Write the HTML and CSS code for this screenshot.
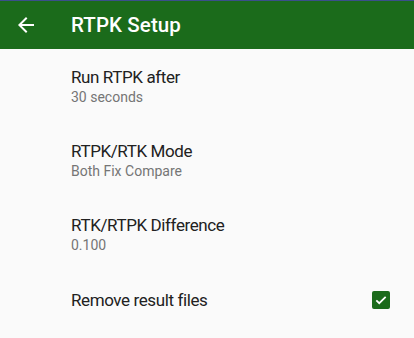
FILE: index.html
```html
<!DOCTYPE html>
<html lang="en">
    <head>
        <meta charset="UTF-8" />
        <meta name="viewport" content="width=device-width, initial-scale=1.0" />
        <link rel="stylesheet" href="styles.css">
        <title>RTPK Setup</title>
    </head>
    <body>
        <header class="toolbar">
            <button class="back-btn" aria-label="Back">
                <svg width="24" height="24" viewBox="0 0 24 24">
                    <path d="M20 11H7.83l5.59-5.59L12 4l-8 8 8 8 1.41-1.41L7.83 13H20v-2z" fill="#fff" />
                </svg>
            </button>
            <h1 class="title">RTPK Setup</h1>
        </header>

        <ul class="prefs">
            <li class="pref">
                <div class="pref-text">
                    <span class="pref-title">Run RTPK after</span>
                    <span class="pref-summary">30 seconds</span>
                </div>
            </li>
            <li class="pref">
                <div class="pref-text">
                    <span class="pref-title">RTPK/RTK Mode</span>
                    <span class="pref-summary">Both Fix Compare</span>
                </div>
            </li>
            <li class="pref">
                <div class="pref-text">
                    <span class="pref-title">RTK/RTPK Difference</span>
                    <span class="pref-summary">0.100</span>
                </div>
            </li>
            <li class="pref pref-single">
                <div class="pref-text">
                    <span class="pref-title">Remove result files</span>
                </div>
                <span class="checkbox checked">
                    <svg width="14" height="14" viewBox="0 0 24 24">
                        <path d="M4 12.5l5 5L20 6.5" fill="none" stroke="#fff" stroke-width="3" />
                    </svg>
                </span>
            </li>
        </ul>
    </body>
</html>
```

FILE: styles.css
```css
* {
    padding: 0;
    margin: 0;
    box-sizing: border-box;
}

body {
    min-height: 100vh;
    background: #fafafa;
    font-family: Roboto, "Noto Sans", sans-serif;
    color: #212121;
}

.toolbar {
    height: 49px;
    display: flex;
    align-items: center;
    background: #1b6b1b;
    border-top: 1px solid #3b4f8c;
    color: #fff;
}

.back-btn {
    all: unset;
    width: 24px;
    height: 24px;
    margin-left: 14px;
    display: flex;
}

.title {
    margin-left: 33px;
    font-size: 20.5px;
    font-weight: 500;
    letter-spacing: 0.1px;
}

.prefs {
    list-style: none;
}

.pref {
    display: flex;
    align-items: center;
    padding: 17px 24px 16px 71px;
}

.pref-single {
    min-height: 58px;
    padding-top: 0;
    padding-bottom: 0;
}

.pref-text {
    flex: 1;
    display: flex;
    flex-direction: column;
}

.pref-title {
    font-size: 17px;
    line-height: 22px;
    letter-spacing: -0.4px;
}

.pref-summary {
    font-size: 14px;
    line-height: 19px;
    color: #757575;
}

.checkbox {
    width: 18px;
    height: 18px;
    border-radius: 2px;
    display: flex;
    align-items: center;
    justify-content: center;
}

.checkbox.checked {
    background: #1b6b1b;
}
```
